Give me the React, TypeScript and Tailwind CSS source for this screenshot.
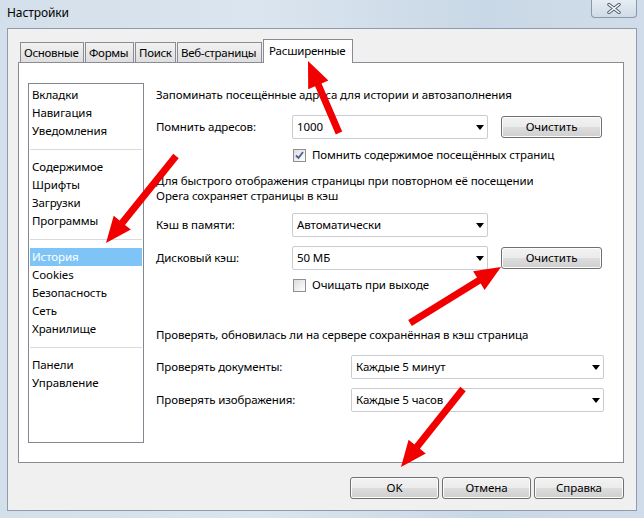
import React from 'react';

const font = "font-['Noto_Sans',sans-serif]";

function arrowPoints(tx: number, ty: number, hx: number, hy: number) {
  const dx = hx - tx;
  const dy = hy - ty;
  const len = Math.sqrt(dx * dx + dy * dy);
  const ux = dx / len;
  const uy = dy / len;
  const px = -uy;
  const py = ux;
  const w = 3.5;
  const hw = 11;
  const hl = 26;
  const bx = hx - ux * hl;
  const by = hy - uy * hl;
  const pts = [
    [tx + px * w, ty + py * w],
    [bx + px * w, by + py * w],
    [bx + px * hw, by + py * hw],
    [hx, hy],
    [bx - px * hw, by - py * hw],
    [bx - px * w, by - py * w],
    [tx - px * w, ty - py * w],
  ];
  return pts.map(p => `${p[0].toFixed(1)},${p[1].toFixed(1)}`).join(' ');
}

function Dropdown({ value, width }: { value: string; width: string }) {
  return (
    <div className={`flex items-center justify-between h-[24px] ${width} border border-[#c9ccd1] rounded-[2px] bg-white pl-[4px] pr-[3px]`}>
      <span>{value}</span>
      <svg width="8" height="5" viewBox="0 0 8 5">
        <path d="M0 0 L8 0 L4 5 Z" fill="#000" />
      </svg>
    </div>
  );
}

function Button({ label, width }: { label: string; width: string }) {
  return (
    <div className={`flex items-center justify-center h-[22px] ${width} border border-[#707070] rounded-[3px] bg-[linear-gradient(#f2f2f2_0%,#ebebeb_50%,#dddddd_51%,#cfcfcf_100%)] shadow-[inset_0_0_0_1px_#fcfcfc]`}>
      {label}
    </div>
  );
}

function Checkbox({ checked }: { checked?: boolean }) {
  return (
    <div className="w-[13px] h-[13px] border border-[#8e8f8f] bg-[linear-gradient(135deg,#dcdcdc,#ffffff)] flex items-center justify-center">
      {checked && (
        <svg width="9" height="9" viewBox="0 0 9 9">
          <path d="M1 4.5 L3.5 7 L8 1" stroke="#4a5f97" strokeWidth="1.8" fill="none" />
        </svg>
      )}
    </div>
  );
}

const tabs = ['Основные', 'Формы', 'Поиск', 'Веб-страницы'];
const tabWidths = ['w-[64px]', 'w-[49px]', 'w-[41px]', 'w-[85px]'];

const groups = [
  ['Вкладки', 'Навигация', 'Уведомления'],
  ['Содержимое', 'Шрифты', 'Загрузки', 'Программы'],
  ['История', 'Cookies', 'Безопасность', 'Сеть', 'Хранилище'],
  ['Панели', 'Управление'],
];

export default function App() {
  return (
    <div className={`relative w-[644px] h-[518px] overflow-hidden bg-[linear-gradient(90deg,#d3dfea,#dbe5ef_40%,#c9d8e6_75%,#d0dcea)] text-[11.5px] tracking-[-0.1px] text-black whitespace-nowrap ${font}`}>
      {/* title bar */}
      <div className="flex items-start justify-between h-[28px]">
        <div className="pl-[7px] pt-[5px] leading-[16px] text-[12px]">Настройки</div>
        <div className="mr-[7px] w-[46px] h-[18px] border border-t-0 border-[#8a98a8] rounded-b-[4px] bg-[linear-gradient(#e6edf4,#cfdbe7)] flex items-center justify-center">
          <svg width="14" height="11" viewBox="0 0 14 11">
            <path d="M2 1.5 L12 9.5 M12 1.5 L2 9.5" stroke="#4d5a68" strokeWidth="3.4" strokeLinecap="round" />
            <path d="M2 1.5 L12 9.5 M12 1.5 L2 9.5" stroke="#ffffff" strokeWidth="1.6" strokeLinecap="round" />
          </svg>
        </div>
      </div>

      {/* client area */}
      <div className="mx-[7px] h-[483px] border border-[#8f9cab] bg-[#f0f0f0] pl-[10px] pt-[10px]">
        <div className="relative z-10 flex items-end h-[24px] -mb-[1px] ml-[2px] gap-[1px]">
          {tabs.map((t, i) => (
            <div
              key={t}
              className={`mb-[1px] h-[20px] ${tabWidths[i]} overflow-hidden border border-b-0 border-[#898c95] bg-[linear-gradient(#f2f2f2,#dedede)] pl-[3px] leading-[19px] tracking-[-0.3px]`}
            >
              {t}
            </div>
          ))}
          <div className="h-[24px] w-[90px] border border-b-0 border-[#898c95] bg-white pl-[5px] leading-[21px] tracking-[-0.2px]">
            Расширенные
          </div>
        </div>

        <div className="flex w-[606px] h-[401px] border border-[#898c95] bg-white pl-[9px] pt-[20px]">
          {/* left list */}
          <div className="w-[116px] h-[360px] border border-[#828790] pt-[2px] px-[1px]">
            {groups.map((g, gi) => (
              <div key={gi}>
                {gi > 0 && (
                  <div className="h-[18px] flex items-center">
                    <div className="w-full h-[1px] bg-[#dadada]" />
                  </div>
                )}
                {g.map(item => (
                  <div
                    key={item}
                    className={`h-[18px] leading-[18px] pl-[2px] ${item === 'История' ? 'bg-[#7fc4f6] text-white' : ''}`}
                  >
                    {item}
                  </div>
                ))}
              </div>
            ))}
          </div>

          {/* right content */}
          <div className="ml-[12px] flex flex-col">
            <div className="mt-[4px] h-[16px] leading-[16px]">Запоминать посещённые адреса для истории и автозаполнения</div>

            <div className="mt-[12px] flex items-center h-[24px]">
              <div className="w-[136px]">Помнить адресов:</div>
              <Dropdown value="1000" width="w-[196px]" />
              <div className="ml-[13px]">
                <Button label="Очистить" width="w-[101px]" />
              </div>
            </div>

            <div className="mt-[8px] flex items-center h-[16px] pl-[137px] gap-[6px]">
              <Checkbox checked />
              <span>Помнить содержимое посещённых страниц</span>
            </div>

            <div className="mt-[10px] leading-[15px]">
              <div>Для быстрого отображения страницы при повторном её посещении</div>
              <div>Opera сохраняет страницы в кэш</div>
            </div>

            <div className="mt-[10px] flex items-center h-[24px]">
              <div className="w-[136px]">Кэш в памяти:</div>
              <Dropdown value="Автоматически" width="w-[196px]" />
            </div>

            <div className="mt-[9px] flex items-center h-[24px]">
              <div className="w-[136px]">Дисковый кэш:</div>
              <Dropdown value="50 МБ" width="w-[196px]" />
              <div className="ml-[13px]">
                <Button label="Очистить" width="w-[101px]" />
              </div>
            </div>

            <div className="mt-[7px] flex items-center h-[16px] pl-[137px] gap-[6px]">
              <Checkbox />
              <span>Очищать при выходе</span>
            </div>

            <div className="mt-[34px] h-[16px] leading-[16px]">Проверять, обновилась ли на сервере сохранённая в кэш страница</div>

            <div className="mt-[12px] flex items-center h-[24px]">
              <div className="w-[195px]">Проверять документы:</div>
              <Dropdown value="Каждые 5 минут" width="w-[253px]" />
            </div>

            <div className="mt-[9px] flex items-center h-[24px]">
              <div className="w-[195px]">Проверять изображения:</div>
              <Dropdown value="Каждые 5 часов" width="w-[253px]" />
            </div>
          </div>
        </div>

        <div className="w-[606px] mt-[14px] flex justify-end gap-[3px]">
          <Button label="OK" width="w-[89px]" />
          <Button label="Отмена" width="w-[89px]" />
          <Button label="Справка" width="w-[90px]" />
        </div>
      </div>

      {/* red annotation arrows */}
      <svg className="absolute inset-0 pointer-events-none z-20" width="644" height="518" viewBox="0 0 644 518">
        <polygon points={arrowPoints(339, 133, 308, 61)} fill="#f20000" />
        <polygon points={arrowPoints(176, 156, 106, 243)} fill="#f20000" />
        <polygon points={arrowPoints(410, 323, 501, 267)} fill="#f20000" />
        <polygon points={arrowPoints(463, 389, 401, 467)} fill="#f20000" />
      </svg>
    </div>
  );
}
